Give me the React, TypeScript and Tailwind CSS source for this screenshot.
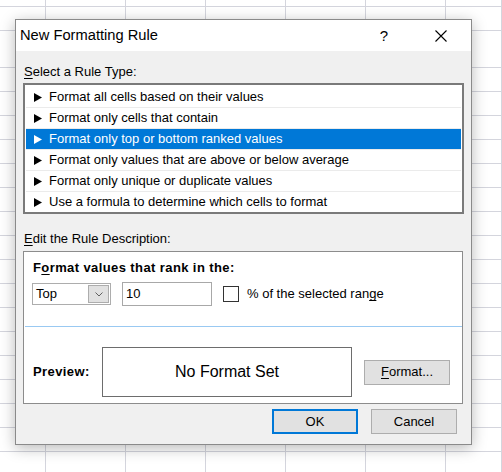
const rowHeights = [7, 24, 37, ...Array.from({ length: 17 }, () => 24)];
const colWidths = [46, 80, 80, 80, 80, 80, 56];

const ruleTypes = [
  "Format all cells based on their values",
  "Format only cells that contain",
  "Format only top or bottom ranked values",
  "Format only values that are above or below average",
  "Format only unique or duplicate values",
  "Use a formula to determine which cells to format",
];

function Arrow({ white }: { white?: boolean }) {
  return (
    <svg width="8" height="9" viewBox="0 0 8 9" className="shrink-0">
      <polygon points="0,0 8,4.5 0,9" fill={white ? "#ffffff" : "#000000"} />
    </svg>
  );
}

function SheetGrid() {
  return (
    <div className="flex flex-col">
      {rowHeights.map((h, r) => (
        <div
          key={r}
          className="flex border-b border-[#d4d5dd] box-border"
          style={{ height: h }}
        >
          {colWidths.map((w, c) => (
            <div
              key={c}
              className="h-full border-r border-[#d4d5dd] box-border shrink-0"
              style={{ width: w }}
            />
          ))}
        </div>
      ))}
    </div>
  );
}

export default function App() {
  const selected = 2;

  return (
    <div className="relative w-[502px] h-[472px] overflow-hidden bg-white font-['Liberation_Sans',Arial,sans-serif] text-[13px] text-black">
      <SheetGrid />

      {/* Dialog */}
      <div className="absolute left-[15px] top-[19px] w-[457px] h-[426px] border border-[#8a8a8a] bg-[#f0f0f0] flex flex-col shadow-[0_3px_14px_rgba(0,0,0,0.28)]">
        {/* Title bar */}
        <div className="h-[31px] bg-white flex items-center pl-[4px] pr-[24px] shrink-0">
          <span className="text-[14.7px] leading-none">New Formatting Rule</span>
          <span className="ml-auto text-[15px] leading-none">?</span>
          <svg width="12" height="12" viewBox="0 0 12 12" className="ml-[47px]">
            <path d="M0.5 0.5L11.5 11.5M11.5 0.5L0.5 11.5" stroke="#000" strokeWidth="1.1" />
          </svg>
        </div>

        {/* Body */}
        <div className="flex flex-col pl-[7px]">
          <div className="mt-[13px] ml-px h-[16px] leading-[16px]">
            <span className="underline underline-offset-2">S</span>elect a Rule Type:
          </div>

          <div className="mt-[3px] w-[441px] h-[131px] border-2 border-[#7a7a7a] bg-white pt-[2px] px-px overflow-hidden">
            {ruleTypes.map((t, i) => (
              <div
                key={t}
                className={`h-[21px] flex items-center pl-[8px] border-b border-[#ebebeb] ${
                  i === selected ? "bg-[#0078d7] text-white" : ""
                }`}
              >
                <Arrow white={i === selected} />
                <span className="ml-[7px] whitespace-nowrap">{t}</span>
              </div>
            ))}
          </div>

          <div className="mt-[17px] ml-px h-[16px] leading-[16px]">
            <span className="underline underline-offset-2">E</span>dit the Rule Description:
          </div>

          {/* Description box */}
          <div className="mt-[4px] w-[440px] h-[153px] border border-[#8c8c8c] bg-white flex flex-col">
            <div className="pt-[8px] pl-[8px]">
              <div className="ml-px h-[16px] leading-[16px] font-bold tracking-[0.4px] whitespace-nowrap">
                F<span className="underline underline-offset-2">o</span>rmat values that rank in the:
              </div>
              <div className="mt-[6px] h-[24px] flex items-center">
                <div className="w-[79px] h-[22px] border border-[#adadad] bg-white flex items-center">
                  <span className="pl-[3px]">Top</span>
                  <div className="ml-auto mr-px w-[21px] h-[18px] border border-[#adadad] bg-[#e1e1e1] flex items-center justify-center">
                    <svg width="8" height="5" viewBox="0 0 8 5">
                      <polyline points="0.5,0.5 4,4 7.5,0.5" fill="none" stroke="#606060" strokeWidth="1" />
                    </svg>
                  </div>
                </div>
                <div className="ml-[11px] w-[90px] h-[24px] border border-[#a8a8a8] bg-white flex items-center pl-[3px]">
                  10
                </div>
                <div className="ml-[11px] w-[16px] h-[16px] border border-[#333333] bg-white" />
                <span className="ml-[8px] whitespace-nowrap">
                  % of the selected ran<span className="underline underline-offset-2">g</span>e
                </span>
              </div>
            </div>

            <div className="mt-[20px] ml-px w-[437px] h-px bg-[#99c9f2]" />

            <div className="mt-[20px] pl-[9px] flex items-center">
              <div className="w-[69px] font-bold tracking-[0.4px]">Preview:</div>
              <div className="w-[250px] h-[50px] border border-[#6d6d6d] flex items-center justify-center text-[16px]">
                No Format Set
              </div>
              <div className="ml-[12px] w-[86px] h-[25px] border border-[#adadad] bg-[#e1e1e1] flex items-center justify-center">
                <span>
                  <span className="underline underline-offset-2">F</span>ormat...
                </span>
              </div>
            </div>
          </div>

          {/* Buttons */}
          <div className="mt-[5px] flex justify-end pr-[14px]">
            <div className="w-[86px] h-[25px] border-2 border-[#0078d7] bg-[#e1e1e1] flex items-center justify-center">
              OK
            </div>
            <div className="ml-[13px] w-[86px] h-[25px] border border-[#adadad] bg-[#e1e1e1] flex items-center justify-center">
              Cancel
            </div>
          </div>
        </div>
      </div>
    </div>
  );
}
